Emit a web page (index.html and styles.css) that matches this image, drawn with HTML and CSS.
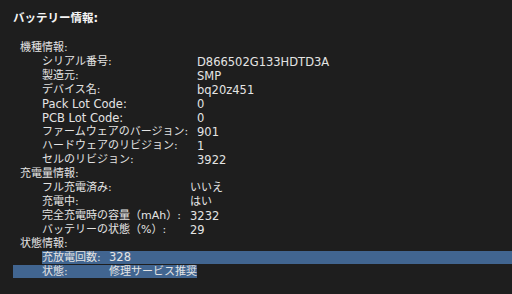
FILE: index.html
```html
<!DOCTYPE html>
<html lang="ja">
<head>
<meta charset="utf-8">
<link rel="stylesheet" href="styles.css">
</head>
<body>
<div class="panel">
  <div class="title">バッテリー情報:</div>

  <div class="group">
    <div class="heading">機種情報:</div>
    <div class="rows rows-model">
      <div class="label">シリアル番号:</div><div class="value num">D866502G133HDTD3A</div>
      <div class="label">製造元:</div><div class="value num">SMP</div>
      <div class="label">デバイス名:</div><div class="value num">bq20z451</div>
      <div class="label num">Pack Lot Code:</div><div class="value num">0</div>
      <div class="label num">PCB Lot Code:</div><div class="value num">0</div>
      <div class="label">ファームウェアのバージョン:</div><div class="value num">901</div>
      <div class="label">ハードウェアのリビジョン:</div><div class="value num">1</div>
      <div class="label">セルのリビジョン:</div><div class="value num">3922</div>
    </div>
  </div>

  <div class="group">
    <div class="heading">充電量情報:</div>
    <div class="rows rows-charge">
      <div class="label">フル充電済み:</div><div class="value">いいえ</div>
      <div class="label">充電中:</div><div class="value">はい</div>
      <div class="label">完全充電時の容量（mAh）:</div><div class="value num">3232</div>
      <div class="label">バッテリーの状態（%）:</div><div class="value num">29</div>
    </div>
  </div>

  <div class="group">
    <div class="heading">状態情報:</div>
    <div class="rows-status">
      <div class="srow sel-first"><div class="label">充放電回数:</div><div class="value num">328</div></div>
      <div class="srow sel-last"><div class="label">状態:</div><div class="value">修理サービス推奨</div></div>
    </div>
  </div>
</div>
</body>
</html>
```

FILE: styles.css
```css
html, body {
  margin: 0;
  padding: 0;
  background: #1e1e1e;
}

body {
  width: 512px;
  height: 294px;
  overflow: hidden;
  font-family: "DejaVu Sans", "Noto Sans CJK JP", sans-serif;
  font-size: 11px;
  line-height: 14px;
  color: #e4e4e4;
}

.panel {
  padding: 11px 0 0 13px;
}

.title {
  font-weight: bold;
  font-size: 11.5px;
  color: #f4f4f4;
  margin-bottom: 16px;
}

.group {
  padding-left: 7px;
}

.heading {
  white-space: nowrap;
}

.rows {
  display: grid;
  padding-left: 22px;
}

.rows-model {
  grid-template-columns: 155px auto;
}

.rows-charge {
  grid-template-columns: 148px auto;
}

.label, .value {
  white-space: nowrap;
}

.num {
  font-size: 11.5px;
}

.rows-status {
  padding-left: 22px;
}

.srow {
  display: grid;
  grid-template-columns: 67px auto;
}

.sel-first {
  background: #416590;
  height: 13px;
  margin-bottom: 1px;
  line-height: 13px;
}

.sel-last {
  background: #416590;
  width: fit-content;
  margin-left: -29px;
  padding-left: 29px;
  height: 13px;
  line-height: 13px;
}
```
